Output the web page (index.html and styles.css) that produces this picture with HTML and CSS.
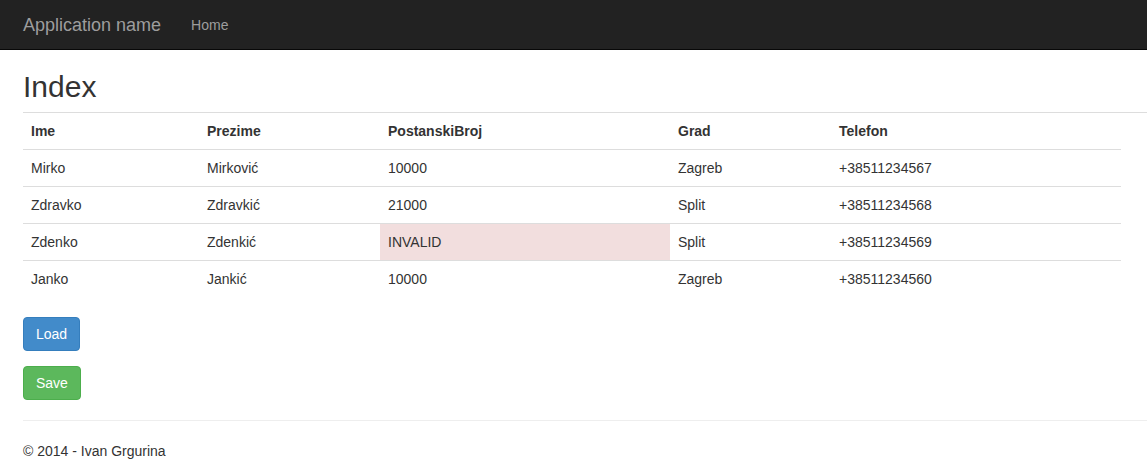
FILE: index.html
```html
<!DOCTYPE html>
<html>
<head>
<meta charset="utf-8">
<title>Index</title>
<link rel="stylesheet" href="styles.css">
</head>
<body>
<nav class="navbar">
  <a class="brand" href="#">Application name</a>
  <a class="nav-link" href="#">Home</a>
</nav>
<main class="container">
  <h2 class="title">Index</h2>
  <table class="table">
    <colgroup>
      <col class="c1"><col class="c2"><col class="c3"><col class="c4"><col class="c5"><col class="c6">
    </colgroup>
    <tbody>
      <tr><th>Ime</th><th>Prezime</th><th>PostanskiBroj</th><th>Grad</th><th>Telefon</th><th></th></tr>
      <tr><td>Mirko</td><td>Mirković</td><td>10000</td><td>Zagreb</td><td>+38511234567</td></tr>
      <tr><td>Zdravko</td><td>Zdravkić</td><td>21000</td><td>Split</td><td>+38511234568</td></tr>
      <tr><td>Zdenko</td><td>Zdenkić</td><td class="danger">INVALID</td><td>Split</td><td>+38511234569</td></tr>
      <tr><td>Janko</td><td>Jankić</td><td>10000</td><td>Zagreb</td><td>+38511234560</td></tr>
    </tbody>
  </table>
  <div class="actions">
    <div><button class="btn btn-primary" type="button">Load</button></div>
    <div><button class="btn btn-success" type="button">Save</button></div>
  </div>
  <hr class="sep">
  <footer class="footer">
    <p>© 2014 - Ivan Grgurina</p>
  </footer>
</main>
</body>
</html>
```

FILE: styles.css
```css
* { box-sizing: border-box; }
html, body { margin: 0; padding: 0; }
body {
  font-family: "Liberation Sans", Arial, Helvetica, sans-serif;
  font-size: 14px;
  line-height: 20px;
  color: #333333;
  background: #ffffff;
  overflow: hidden;
}
.navbar {
  height: 50px;
  background: #222222;
  border-bottom: 1px solid #080808;
  display: flex;
  align-items: flex-start;
  padding-left: 8px;
}
.brand {
  display: block;
  padding: 15px;
  font-size: 18px;
  line-height: 20px;
  height: 49px;
  color: #9d9d9d;
  text-decoration: none;
}
.nav-link {
  display: block;
  padding: 15px;
  line-height: 20px;
  color: #9d9d9d;
  text-decoration: none;
}
.container {
  padding-left: 23px;
}
.title {
  font-size: 30px;
  font-weight: 500;
  line-height: 33px;
  margin: 20px 0 9px 0;
  color: #333333;
}
.table {
  width: 100%;
  table-layout: fixed;
  border-collapse: collapse;
  border-spacing: 0;
  margin-bottom: 20px;
}
.c1 { width: 176px; }
.c2 { width: 181px; }
.c3 { width: 290px; }
.c4 { width: 161px; }
.c5 { width: 290px; }
.table th, .table td {
  padding: 8px;
  line-height: 20px;
  text-align: left;
  vertical-align: top;
  border-top: 1px solid #dddddd;
}
.table th { font-weight: bold; }
.table td.danger { background: #f2dede; }
.actions {
  display: flex;
  flex-direction: column;
  gap: 15px;
}
.btn {
  font-family: inherit;
  font-size: 14px;
  line-height: 20px;
  padding: 6px 12px;
  border: 1px solid transparent;
  border-radius: 4px;
  color: #ffffff;
  cursor: pointer;
}
.btn-primary { background: #428bca; border-color: #357ebd; }
.btn-success { background: #5cb85c; border-color: #4cae4c; }
.sep {
  margin: 20px 0 20px 0;
  border: 0;
  border-top: 1px solid #eeeeee;
}
.footer p { margin: 0; }
```
